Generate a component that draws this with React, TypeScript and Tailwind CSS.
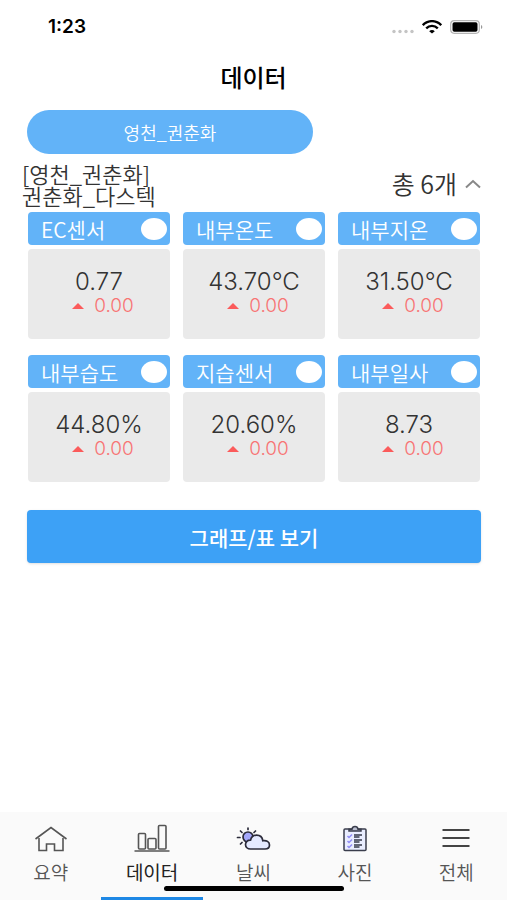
import { useState } from 'react';
import type { ReactNode } from 'react';

interface Sensor {
    id: string;
    name: string;
    value: string;
    diff: string;
}

const sensors: Sensor[] = [
    { id: 'ec', name: 'EC센서', value: '0.77', diff: '0.00' },
    { id: 'temp', name: '내부온도', value: '43.70°C', diff: '0.00' },
    { id: 'soil-temp', name: '내부지온', value: '31.50°C', diff: '0.00' },
    { id: 'humidity', name: '내부습도', value: '44.80%', diff: '0.00' },
    { id: 'soil-humidity', name: '지습센서', value: '20.60%', diff: '0.00' },
    { id: 'solar', name: '내부일사', value: '8.73', diff: '0.00' }
];

const farmName = '[영천_권춘화]\n권춘화_다스텍';

function HomeIcon() {
    return (
        <svg width="34" height="28" viewBox="0 0 34 28" fill="none" stroke="#555" strokeWidth="1.6">
            <path d="M1.5 15 17 3.500l15.500 11.500" />
            <path d="M5 14v12.500h7.500V20h8v6.500H29V14" />
        </svg>
    );
}

function ChartIcon() {
    return (
        <svg width="36" height="28" viewBox="0 0 36 28" fill="none" stroke="#555" strokeWidth="1.6">
            <rect x="4.500" y="9.500" width="7" height="15.500" rx="1" />
            <rect x="14" y="14.500" width="8" height="10.500" rx="1" />
            <rect x="24.500" y="1.500" width="7.500" height="23.500" rx="1" />
            <path d="M.5 27h35" />
        </svg>
    );
}

function WeatherIcon() {
    return (
        <svg width="36" height="28" viewBox="0 0 36 28" fill="none" stroke="#2b2b3a" strokeWidth="1.700" strokeLinecap="round">
            <path d="M12 4v1.500M4.500 7 6 8.500M19.500 7 18 8.500M1.500 13.500H4M4.500 20 6 18.500" />
            <circle cx="12" cy="13" r="5" fill="#a5a8fb" />
            <path
                d="M14.500 25C11.500 25 9.500 23 9.500 20.500s2-4.500 5-4.300c.8-3.200 3.200-5 6-5 3.400 0 5.900 2.300 6.300 5.500 3.700-.6 6.700 1 6.700 4.300 0 2.500-2 4-4.500 4z"
                fill="#e4e9ff"
            />
        </svg>
    );
}

function ClipboardIcon() {
    return (
        <svg width="26" height="28" viewBox="0 0 26 28" fill="none" stroke="#3a3d4c" strokeWidth="1.500">
            <rect x="2" y="5" width="22" height="21.500" rx="1" fill="#e9edff" />
            <path d="M7 7V5.200h3c.3-1.800 1.400-2.700 3-2.700s2.700.9 3 2.700h3V7z" fill="#b9bdce" />
            <path d="m5.500 12 1.500 1.500 3-3M5.500 17 7 18.500l3-3M5.500 22 7 23.500l3-3" stroke="#908cf5" />
            <path d="M12 11h8M12 13h5.500M12 16h8M12 18h5.500M12 21h8M12 23h5.500" stroke="#35384a" strokeWidth="1.500" />
        </svg>
    );
}

function MenuIcon() {
    return (
        <svg width="28" height="28" viewBox="0 0 28 28" stroke="#444" strokeWidth="2">
            <path d="M.5 6h27M.5 14h27M.5 22h27" />
        </svg>
    );
}

const tabs: { id: string; label: string; icon: ReactNode }[] = [
    { id: 'summary', label: '요약', icon: <HomeIcon /> },
    { id: 'data', label: '데이터', icon: <ChartIcon /> },
    { id: 'weather', label: '날씨', icon: <WeatherIcon /> },
    { id: 'photo', label: '사진', icon: <ClipboardIcon /> },
    { id: 'all', label: '전체', icon: <MenuIcon /> }
];

function StatusBar() {
    return (
        <div className="flex h-[54px] items-center justify-between pl-12 pr-6 text-black">
            <span className="font-['Inter'] text-[19px] font-semibold">1:23</span>
            <div className="flex items-center gap-2">
                <svg width="22" height="14" viewBox="0 0 22 14" fill="#c4c4c4">
                    <circle cx="2" cy="11.500" r="1.700" />
                    <circle cx="8" cy="11.500" r="1.700" />
                    <circle cx="14" cy="11.500" r="1.700" />
                    <circle cx="20" cy="11.500" r="1.700" />
                </svg>
                <svg width="20" height="14" viewBox="0 0 20 14" fill="none" stroke="#000" strokeWidth="2.400">
                    <path d="M.8 5.200C6-.2 14-.2 19.200 5.200" />
                    <path d="M4.200 8.300c3.300-3.200 8.300-3.200 11.600 0" />
                    <path d="M7.200 11.200c1.600-1.600 4-1.600 5.600 0L10 13.500z" fill="#000" stroke="none" />
                </svg>
                <svg width="33" height="14" viewBox="0 0 33 14">
                    <rect x=".7" y=".7" width="28.600" height="12.600" rx="3.500" fill="#fff" stroke="#b5b5b5" strokeWidth="1.200" />
                    <rect x="2.500" y="2.300" width="25" height="9.400" rx="1.800" fill="#000" />
                    <path d="M31 5v4c1.800-.6 1.800-3.400 0-4z" fill="#999" />
                </svg>
            </div>
        </div>
    );
}

function SensorCard({ sensor }: { sensor: Sensor }) {
    const [on, setOn] = useState(true);

    return (
        <div className="flex flex-col gap-1">
            <label className="flex h-[33px] items-center justify-between rounded bg-[#62b3f8] pr-[3px] pl-[13px] text-[21px] leading-6 font-[350] text-white">
                {sensor.name}
                <input
                    type="checkbox"
                    checked={on}
                    onChange={(e) => setOn(e.target.checked)}
                    className="h-[22px] w-[26px] shrink-0 appearance-none rounded-[50%] bg-white"
                />
            </label>
            <div className="flex h-[90px] flex-col items-center rounded bg-[#eaeaea] pt-5 font-['Inter','Noto_Sans_CJK_KR',sans-serif] font-light">
                <span className="text-2xl leading-[26px] text-[#333]">{sensor.value}</span>
                <span className="flex items-center gap-[10px] pl-2 text-[19px] leading-[22px] text-[#f87474]">
                    <svg width="12" height="6" viewBox="0 0 12 6" fill="#fb5b5b">
                        <path d="M0 6 6 0l6 6z" />
                    </svg>
                    {sensor.diff}
                </span>
            </div>
        </div>
    );
}

export default function App() {
    const [activeTab, setActiveTab] = useState('data');
    const [open, setOpen] = useState(true);

    return (
        <div className="flex min-h-screen flex-col bg-white font-['Noto_Sans_CJK_KR',sans-serif] text-[#333]">
            <StatusBar />

            <header className="flex h-14 items-start justify-center pt-1">
                <h1 className="text-2xl leading-[38px] font-medium text-black">데이터</h1>
            </header>

            <main className="flex flex-1 flex-col pr-[26px] pl-[27px]">
                <button className="h-11 w-[63%] rounded-full bg-[#62b3f8] text-lg leading-6 font-[350] text-white">
                    영천_권춘화
                </button>

                <div className="-ml-[5px] mt-2 flex h-11 items-center justify-between">
                    <p className="text-[22px] leading-[22px] font-[350] whitespace-pre-line">{farmName}</p>
                    <button
                        onClick={() => setOpen(!open)}
                        aria-expanded={open}
                        className="flex items-center gap-2 text-[25px] font-[350]"
                    >
                        총 6개
                        <svg width="16" height="10" viewBox="0 0 16 10" fill="none" stroke="#888" strokeWidth="2">
                            <path d={open ? 'M1 8.500 8 2l7 6.500' : 'M1 2l7 6.500L15 2'} />
                        </svg>
                    </button>
                </div>

                {open && (
                    <div className="mt-1.5 grid grid-cols-3 gap-x-[13px] gap-y-4 px-px">
                        {sensors.map((sensor) => (
                            <SensorCard key={sensor.id} sensor={sensor} />
                        ))}
                    </div>
                )}

                <button className="mt-7 h-[53px] rounded bg-[#3da1f6] text-[21px] leading-6 font-medium text-white shadow">
                    그래프/표 보기
                </button>
            </main>

            <nav className="relative flex h-[88px] bg-[#fafafa]">
                {tabs.map((tab) => (
                    <button
                        key={tab.id}
                        onClick={() => setActiveTab(tab.id)}
                        className={`flex flex-1 flex-col items-center gap-2 border-b-[3px] pt-3 text-[19px] leading-6 ${
                            tab.id === activeTab
                                ? 'border-[#1e88e5] font-normal text-[#222]'
                                : 'border-transparent font-[350] text-[#555]'
                        }`}
                    >
                        {tab.icon}
                        {tab.label}
                    </button>
                ))}
                {/* home indicator */}
                <div className="absolute bottom-[9px] left-1/2 h-[5px] w-[180px] -translate-x-1/2 rounded-full bg-black" />
            </nav>
        </div>
    );
}
